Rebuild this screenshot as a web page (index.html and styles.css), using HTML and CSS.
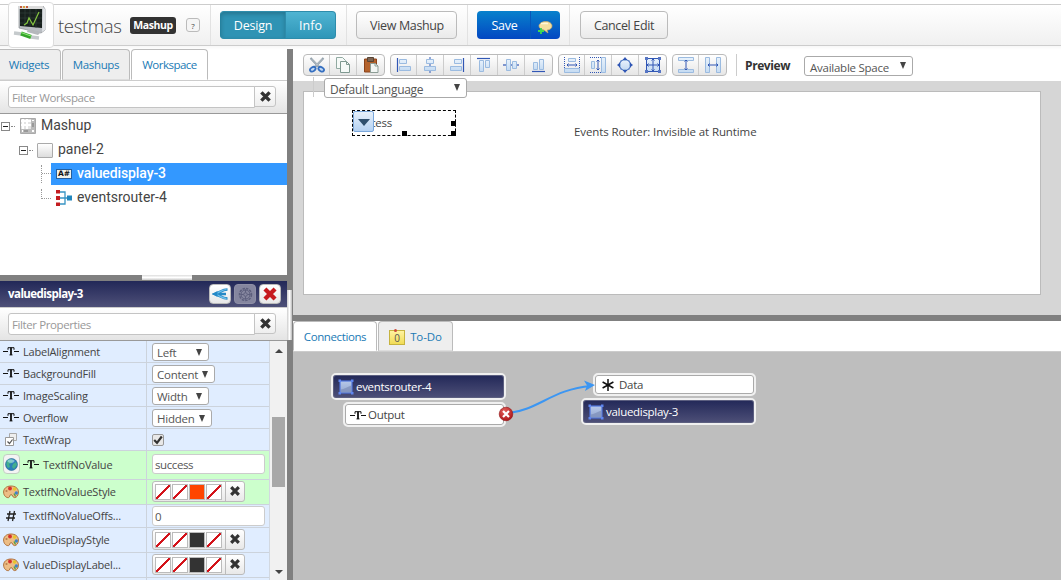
FILE: index.html
```
<!DOCTYPE html>
<html lang="en">
<head>
    <meta charset="UTF-8">
    <title>testmas - Mashup</title>
    <link rel="stylesheet" href="styles.css">
</head>
<body>
    <!-- Shared icons -->
    <svg class="defs" width="0" height="0">
        <defs>
            <linearGradient id="blue" x1="0" y1="0" x2="0" y2="1"><stop offset="0" stop-color="#e8f2fc"/><stop offset="1" stop-color="#c5dbf2"/></linearGradient>
            <linearGradient id="node" x1="0" y1="0" x2="0" y2="1"><stop offset="0" stop-color="#b7c8e8"/><stop offset="1" stop-color="#93a6cf"/></linearGradient>
            <radialGradient id="red" cx=".4" cy=".3" r=".8"><stop offset="0" stop-color="#e2605c"/><stop offset="1" stop-color="#a80c10"/></radialGradient>
            <symbol id="x" viewBox="0 0 12 12"><path d="M2.2 2.2 9.8 9.8M9.8 2.2 2.2 9.8" stroke="currentColor" stroke-width="3.2"/></symbol>
            <symbol id="text" viewBox="0 0 16 12"><path d="M0 6.500h5M11 6.500h5" stroke="#111" stroke-width="1.200"/><path d="M5 4.800V2.700h6v2.100M6.500 9.900h3" fill="none" stroke="#111"/><path d="M8 2.500v7.500" stroke="#111" stroke-width="1.800"/></symbol>
            <symbol id="palette" viewBox="0 0 16 14"><path d="M8 1C3 1 .6 4 .6 7c0 4 3 6 5 5.600 1.600-.4.6-2.600 2.400-3 1.800-.2 1.500 3 3.400 3C14 12.600 15.400 10 15.400 7 15.400 3 12 1 8 1z" fill="#edbd85" stroke="#a8662f" stroke-width=".9"/><circle cx="7" cy="3.500" r="1.900" fill="#d5312b"/><circle cx="11.500" cy="4" r="1.700" fill="#e6c52c"/><circle cx="13.300" cy="8" r="1.700" fill="#3f83c8"/><circle cx="3.500" cy="6" r="1.100" fill="#b98350"/><path d="M11 8.500l1.500 3" stroke="#59a344" stroke-width="1.400"/></symbol>
            <symbol id="entity" viewBox="0 0 16 16"><rect x="2" y="2" width="12" height="12" fill="url(#node)" stroke="#4f74dc" stroke-width="1.200"/><path d="M2.700 10.500C6 10 9 8 13.300 6.500v7H2.700z" fill="#7c8db8" opacity=".7"/><path d="M.5.5h2.500v2.500h-2.500zM13 .5h2.500v2.500h-2.500zM.5 13h2.500v2.500h-2.500zM13 13h2.500v2.500h-2.500z" fill="#5f86f0"/></symbol>
        </defs>
    </svg>

    <div class="header">
        <div class="logo">
            <svg width="36" height="36" viewBox="0 0 36 36">
                <path d="M6 0 30 0 32 3 32 24 28 27 6 22z" fill="#b9bdc2" stroke="#8b8f94" stroke-width=".7"/>
                <path d="M30 1 32 3 32 24 29 26z" fill="#dfe2e5"/>
                <path d="M6 0h24v3H6z" fill="#dcdcdc"/>
                <path d="M7 0h2v2H7z" fill="#c55b3d"/><path d="M10 0h2v2h-2z" fill="#d9a03c"/><path d="M13 0h2v2h-2z" fill="#c55b3d"/>
                <path d="M7 3 29 3 29 22 7 20z" fill="#17201d"/>
                <path d="M7 7h22M7 12h22M7 17h22M12 3v17M17 3v18M23 3v19" stroke="#34443c" stroke-width=".6"/>
                <path d="M11 19 14 17 16 12 20 19 26 6" fill="none" stroke="#86c840" stroke-width="1.200"/>
                <path d="M15 23 28 26 25 29 14 26z" fill="#b5b8bc"/>
                <path d="M1 27 9 28M18 31 26 32" stroke="#c5cacc" stroke-width="3.500"/>
                <path d="M8 27.500 18 31" stroke="#35a52b" stroke-width="4"/><path d="M8 26.500 18 30" stroke="#93e97b"/>
            </svg>
        </div>
        <span class="title">testmas</span>
        <span class="badge">Mashup</span>
        <button class="help">?</button>
        <div class="header-group mode">
            <button class="btn teal active">Design</button><button class="btn teal">Info</button>
        </div>
        <div class="header-group view"><button class="btn">View Mashup</button></div>
        <div class="header-group save-group">
            <button class="btn save">Save</button><button class="btn comment">
                <svg width="16" height="16" viewBox="0 0 16 16"><path d="M8.500 2.500c4 0 6.500 2 6.500 4.500s-2.500 4-5 4l1 3-4-3C4 10.500 2 9 2 7s2.500-4.500 6.500-4.500z" fill="#f4dfa0" stroke="#c5a864" stroke-width=".7"/><path d="M4 4.500h7" stroke="#fff8d9" stroke-width="1.500"/><path d="M4 9v6M1 12h6" stroke="#40d84f" stroke-width="1.800"/></svg>
            </button>
        </div>
        <div class="header-group cancel"><button class="btn">Cancel Edit</button></div>
    </div>

    <div class="main">
        <div class="left">
            <div class="tabs">
                <div class="tab t-widgets">Widgets</div>
                <div class="tab t-mashups">Mashups</div>
                <div class="tab t-workspace active">Workspace</div>
            </div>
            <div class="filter">
                <div class="filter-input">Filter Workspace</div>
                <button class="clear"><svg width="13" height="13"><use href="#x"/></svg></button>
            </div>
            <div class="tree">
                <div class="tree-row l0">
                    <i class="toggle"></i><i class="dots"></i>
                    <svg width="16" height="16" viewBox="0 0 16 16"><path d="M.5.5h15v15H.5z" fill="#e4e4e4" stroke="#aaa"/><path d="M3 1v10M7 1v10M1 3h10M1 7h10" stroke="#fff" stroke-width="2"/><path d="M11 1h4v14H1v-4h10z" fill="#bbb"/><path d="M12 5h2v4h-2zM4 12h4v2H4z" fill="#999"/><path d="M2 12h1v2H2zM12 2h2v1h-2zM12 12h2v2h-2z" fill="#fff"/></svg>
                    <span>Mashup</span>
                </div>
                <div class="tree-row l1">
                    <i class="toggle"></i><i class="dots"></i><i class="panel-icon"></i><span>panel-2</span>
                </div>
                <div class="tree-row l2 selected">
                    <i class="branch mid"></i>
                    <div class="tree-item"><b class="value-icon">A#</b><span>valuedisplay-3</span></div>
                </div>
                <div class="tree-row l2">
                    <i class="branch"></i>
                    <div class="tree-item">
                        <svg width="17" height="16" viewBox="0 0 17 16"><path d="M3 2h6v12H3M3 8h11" fill="none" stroke="#3794c4" stroke-width="1.300"/><path d="M0 0h4v3.500H0zM0 6h4v4H0zM0 12.500h4V16H0z" fill="#c31c20"/><path d="M11 5.500h5v5h-5z" fill="#2186bd"/></svg>
                        <span>eventsrouter-4</span>
                    </div>
                </div>
            </div>
            <div class="splitter"><i></i></div>
            <div class="props-header">
                <span>valuedisplay-3</span>
                <button><svg width="17" height="14" viewBox="0 0 17 14"><path d="M15.500 2.500C10 2.500 9 5 3 7c6 2 7 4.500 12.500 4.500M3 7h11" fill="none" stroke="#2589c7" stroke-width="2.600"/><path d="M14.500 2.500C10 2.500 9 5 3 7c6 2 7 4.500 11.500 4.500" fill="none" stroke="#6fc0ec" stroke-width="1.200"/><path d="M0 7l5.500-3v6z" fill="#2589c7"/></svg></button>
                <button class="off"><svg width="15" height="15" viewBox="0 0 15 15" fill="none" stroke="#5d5f7d"><circle cx="7.500" cy="7.500" r="6" stroke-width="1.500" stroke-dasharray="2.500 1"/><circle cx="7.500" cy="7.500" r="4.500"/><circle cx="7.500" cy="7.500" r="1.800"/><path d="M7.500 2.500v3M7.500 9.500v3M2.500 7.500h3M9.500 7.500h3"/></svg></button>
                <button class="delete"><svg width="16" height="16"><use href="#x"/></svg></button>
            </div>
            <div class="filter">
                <div class="filter-input">Filter Properties</div>
                <button class="clear"><svg width="13" height="13"><use href="#x"/></svg></button>
            </div>
            <div class="props">
                <div class="props-table">
                    <div class="prop"><div class="name"><svg width="16" height="12"><use href="#text"/></svg>LabelAlignment</div><div class="value"><div class="select w57">Left</div></div></div>
                    <div class="prop"><div class="name"><svg width="16" height="12"><use href="#text"/></svg>BackgroundFill</div><div class="value"><div class="select w63">Content</div></div></div>
                    <div class="prop"><div class="name"><svg width="16" height="12"><use href="#text"/></svg>ImageScaling</div><div class="value"><div class="select w57">Width</div></div></div>
                    <div class="prop"><div class="name"><svg width="16" height="12"><use href="#text"/></svg>Overflow</div><div class="value"><div class="select w60">Hidden</div></div></div>
                    <div class="prop">
                        <div class="name"><svg width="16" height="13" viewBox="0 0 16 13"><path d="M6.500.5h7v7h-7z" fill="#eee" stroke="#aaa"/><path d="M2.500 4.500h8v8h-8z" fill="#fff" stroke="#999"/><path d="M4.500 8.500l2 2 3-4" fill="none" stroke="#555" stroke-width="1.200"/></svg>TextWrap</div>
                        <div class="value"><i class="check"><svg width="10" height="10" viewBox="0 0 10 10"><path d="M1.200 5 4 7.800 8.800 1.500" fill="none" stroke="#333" stroke-width="2.200"/></svg></i></div>
                    </div>
                    <div class="prop h29 changed">
                        <div class="name"><i class="globe"><svg width="13" height="13" viewBox="0 0 13 13"><circle cx="6.500" cy="6.500" r="6" fill="#2b7fb8" stroke="#246796" stroke-width=".6"/><path d="M2 3C4 1 6 1 8 2L7 5 4 6 5 9 3 10C1 8 1 5 2 3zM8 6l3-2 1 3-3 4-2-2z" fill="#42af8d"/><ellipse cx="6" cy="3" rx="3.500" ry="1.800" fill="#b5e2f2" opacity=".6"/></svg></i><svg width="16" height="12"><use href="#text"/></svg>TextIfNoValue</div>
                        <div class="value"><div class="input">success</div></div>
                    </div>
                    <div class="prop h25 changed">
                        <div class="name"><svg width="16" height="14"><use href="#palette"/></svg>TextIfNoValueStyle</div>
                        <div class="value"><div class="style-picker"><i></i><i></i><i class="orange"></i><i></i><b><svg width="12" height="12"><use href="#x"/></svg></b></div></div>
                    </div>
                    <div class="prop h23">
                        <div class="name"><svg width="16" height="12" viewBox="0 0 16 12"><path d="M7 1 5 11M11.500 1l-2 10M4 4h9M3 8h9" stroke="#222" stroke-width="1.300"/></svg>TextIfNoValueOffs...</div>
                        <div class="value"><div class="input">0</div></div>
                    </div>
                    <div class="prop h25">
                        <div class="name"><svg width="16" height="14"><use href="#palette"/></svg>ValueDisplayStyle</div>
                        <div class="value"><div class="style-picker"><i></i><i></i><i class="dark"></i><i></i><b><svg width="12" height="12"><use href="#x"/></svg></b></div></div>
                    </div>
                    <div class="prop h25">
                        <div class="name"><svg width="16" height="14"><use href="#palette"/></svg>ValueDisplayLabel...</div>
                        <div class="value"><div class="style-picker"><i></i><i></i><i class="dark"></i><i></i><b><svg width="12" height="12"><use href="#x"/></svg></b></div></div>
                    </div>
                    <div class="prop"><div class="name"></div><div class="value"></div></div>
                </div>
                <div class="scrollbar"><i class="up"></i><i class="thumb"></i><i class="down"></i></div>
            </div>
        </div>

        <div class="v-splitter"><i></i></div>

        <div class="right">
            <div class="toolbar">
                <div class="tools">
                    <button><svg width="18" height="18" viewBox="0 0 18 18"><path d="M2.500 2 12 12M15.500 2 6 12" stroke="#8796a1" stroke-width="2"/><path d="M3 2.500 12 11.500M15 2.500 6 11.500" stroke="#dbe3e8" stroke-width=".7"/><ellipse cx="4.800" cy="13.200" rx="3" ry="2" transform="rotate(-30 4.800 13.200)" fill="#c2d9f4" stroke="#356fc0" stroke-width="1.800"/><ellipse cx="13.200" cy="13.200" rx="3" ry="2" transform="rotate(30 13.200 13.200)" fill="#c2d9f4" stroke="#356fc0" stroke-width="1.800"/></svg></button>
                    <button><svg width="16" height="18" viewBox="0 0 16 18"><path d="M1.500 1.500h6l3 3v8h-9z" fill="#f6faf8" stroke="#91aaa2"/><path d="M5.500 5.500h6l3 3v8h-9z" fill="#f6faf8" stroke="#7f9991"/><path d="M11.500 5.500v3h3" fill="none" stroke="#7f9991"/></svg></button>
                    <button><svg width="16" height="18" viewBox="0 0 16 18"><path d="M1.500 3h12v13h-12z" fill="#b4622c" stroke="#8a431a"/><path d="M4.500 1.500h6v4h-6z" fill="#7c6554" stroke="#594433"/><path d="M7.500 7.500h5l2.500 2.500v6.500H7.500z" fill="#f2f6f4" stroke="#8c9d96"/><path d="M12 7.500V10h3" fill="none" stroke="#8c9d96"/></svg></button>
                </div>
                <div class="tools">
                    <button><svg viewBox="0 0 16 16"><path d="M1.500 1v14" stroke="#3157b5" stroke-width="1.200"/><path d="M3.500 2.500h7v4h-7zM3.500 9.500h11v4h-11z"/></svg></button>
                    <button><svg viewBox="0 0 16 16"><path d="M8 0v16" stroke="#3157b5"/><path d="M4.500 2.500h7v4h-7zM2.500 9.500h11v4h-11z"/></svg></button>
                    <button><svg viewBox="0 0 16 16"><path d="M14.500 1v14" stroke="#3157b5" stroke-width="1.200"/><path d="M5.500 2.500h7v4h-7zM1.500 9.500h11v4h-11z"/></svg></button>
                    <button><svg viewBox="0 0 16 16"><path d="M1 1.500h13" stroke="#3157b5" stroke-width="1.200"/><path d="M3.500 3.500h4v11h-4zM9.500 3.500h4v7h-4z"/></svg></button>
                    <button><svg viewBox="0 0 16 16"><path d="M0 8h16" stroke="#3157b5" stroke-width="1.200"/><path d="M3.500 2.500h4v11h-4zM9.500 4.500h4v7h-4z"/></svg></button>
                    <button><svg viewBox="0 0 16 16"><path d="M1 14.500h13" stroke="#3157b5" stroke-width="1.200"/><path d="M2.500 5.500h4v7h-4zM8.500 2.500h4v10h-4z"/></svg></button>
                </div>
                <div class="tools">
                    <button><svg viewBox="0 0 16 16"><path d="M.5 0v11M15.500 0v11" stroke="#3157b5" stroke-dasharray="1 1"/><path d="M4.500 1.500h7v3h-7zM.5 11.500h15v4H.5z"/><path class="line" d="M3 8h10M4.500 6.500 3 8l1.500 1.500M11.500 6.500 13 8l-1.500 1.500"/></svg></button>
                    <button><svg viewBox="0 0 16 16"><path d="M0 .5h11M0 15.500h11" stroke="#3157b5" stroke-dasharray="1 1"/><path d="M1.500 4.500h3v7h-3zM11.500.5h4v15h-4z"/><path class="line" d="M8 3v10M6.500 4.500 8 3l1.500 1.500M6.500 11.500 8 13l1.500-1.500"/></svg></button>
                    <button><svg viewBox="0 0 16 16"><path d="M3.500 3.500h9v9h-9z"/><path class="line" d="M6 2.500h4l3.500 3.500v4L10 13.500H6L2.500 10V6z"/><path d="M8 0l2 2.500H6zM8 16l2-2.500H6zM0 8l2.500-2v4zM16 8l-2.500-2v4z" fill="#3157b5" stroke="none"/></svg></button>
                    <button><svg viewBox="0 0 16 16"><path d="M1.500 1.500h13v13h-13z" stroke="#3157b5"/><path class="line" d="M8 1v14M1 8h14M6.500 3.500 8 2l1.500 1.500M6.500 12.500 8 14l1.500-1.500M3.500 6.500 2 8l1.500 1.500M12.500 6.500 14 8l-1.500 1.500"/><path d="M0 0h3v3H0zM13 0h3v3h-3zM0 13h3v3H0zM13 13h3v3h-3z" fill="#5675c4" stroke="none"/></svg></button>
                </div>
                <div class="tools">
                    <button><svg viewBox="0 0 16 16"><path d="M.5.500h15v3H.5zM.5 12.500h15v3H.5z"/><path class="line" d="M8 3v10M6.500 4.500 8 3l1.500 1.500M6.500 11.500 8 13l1.500-1.500"/></svg></button>
                    <button><svg viewBox="0 0 16 16"><path d="M.5.500h4v15h-4zM11.500.500h4v15h-4z"/><path class="line" d="M3 8h10M4.500 6.500 3 8l1.500 1.500M11.500 6.500 13 8l-1.500 1.500"/></svg></button>
                </div>
                <div class="preview">Preview</div>
                <div class="select space">Available Space</div>
                <div class="select language">Default Language</div>
            </div>
            <div class="stage">
                <div class="page">
                    <div class="widget value-widget"><span>success</span><div class="widget-menu"></div><i class="h1"></i><i class="h2"></i><i class="h3"></i></div>
                    <div class="widget router">Events Router: Invisible at Runtime</div>
                </div>
            </div>
            <div class="splitter"></div>
            <div class="tabs bottom-tabs">
                <div class="tab t-connections active">Connections</div>
                <div class="tab t-todo"><span class="note">0</span>To-Do</div>
            </div>
            <div class="connections">
                <div class="node dark n1"><svg width="16" height="16"><use href="#entity"/></svg><span>eventsrouter-4</span></div>
                <div class="node n2"><svg width="16" height="12"><use href="#text"/></svg><span>Output</span></div>
                <div class="node n3"><svg width="12" height="12" viewBox="0 0 12 12"><path d="M6 0v12M.6 3l10.800 6M.6 9l10.800-6" stroke="#111" stroke-width="1.500"/></svg><span>Data</span></div>
                <div class="node dark n4"><svg width="16" height="16"><use href="#entity"/></svg><span>valuedisplay-3</span></div>
                <svg class="wire" width="110" height="50" viewBox="0 0 110 50">
                    <path d="M16 41C45 38 60 17 98 14" fill="none" stroke="#3c96f2" stroke-width="2"/>
                    <path d="M102 13 91 8.500 94 13.500 92 19z" fill="#3c96f2"/>
                    <circle cx="13" cy="42" r="6.800" fill="url(#red)" stroke="#8f1214" stroke-width=".6"/>
                    <path d="M10 39 16 45M16 39 10 45" stroke="#fff" stroke-width="2.200"/>
                </svg>
            </div>
        </div>
    </div>
</body>
</html>
```
FILE: styles.css
```
* {
    box-sizing: border-box;
}
body {
    margin: 0;
    width: 1061px;
    height: 580px;
    overflow: hidden;
    font-family: "Open Sans", "Noto Sans", sans-serif;
    font-size: 12px;
    color: #444;
    background: #fff;
    display: flex;
    flex-direction: column;
}
button {
    font: inherit;
    color: inherit;
    padding: 0;
    margin: 0;
}
svg {
    display: block;
    flex: none;
}
i {
    font-style: normal;
    flex: none;
}
.defs {
    position: absolute;
}

/* Header */
.header {
    height: 42px;
    margin-top: 4px;
    flex: none;
    display: flex;
    align-items: center;
    border-top: 1px solid #ccc;
    border-bottom: 1px solid #ccc;
    background: linear-gradient(#fff, #f0f0f0);
}
.logo {
    width: 46px;
    height: 46px;
    margin: 0 4px 0 8px;
    padding: 3px 4px;
    border: 1px solid #ddd;
    border-radius: 4px;
    background: #fff;
    flex: none;
    position: relative;
    z-index: 1;
}
.title {
    width: 72px;
    font-size: 18.5px;
    font-weight: 300;
    letter-spacing: -0.35px;
    line-height: 30px;
    padding-top: 2px;
}
.badge {
    width: 46px;
    height: 17px;
    border-radius: 3px;
    background: #333;
    color: #fff;
    font-size: 10.5px;
    font-weight: bold;
    line-height: 17px;
    text-align: center;
    letter-spacing: -0.4px;
}
.help {
    width: 14px;
    height: 14px;
    margin-left: 10px;
    border: 1px solid #bbb;
    border-radius: 3px;
    background: #f5f5f5;
    font-size: 8px;
    line-height: 11px;
}
.header-group {
    height: 40px;
    display: flex;
    align-items: center;
    border-left: 1px solid #e2e2e2;
    padding-left: 9px;
}
.mode {
    margin-left: 10px;
    width: 136px;
}
.view {
    width: 121px;
}
.save-group {
    width: 102px;
}
.btn {
    height: 28px;
    border: 1px solid #bbb;
    border-radius: 4px;
    background: linear-gradient(#fff, #eaeaea);
    font-size: 12.5px;
    line-height: 27px;
    letter-spacing: -0.35px;
}
.view .btn {
    width: 101px;
    padding-left: 1px;
}
.cancel .btn {
    width: 88px;
    margin-left: 1px;
}
.teal {
    width: 50px;
    border: 1px solid #2d8cab;
    border-left: 0;
    border-radius: 0 4px 4px 0;
    background: linear-gradient(#4fb4d2, #2f96b8);
    color: #fff;
    letter-spacing: 0;
}
.teal.active {
    width: 66px;
    border-left: 1px solid #2582a0;
    border-radius: 4px 0 0 4px;
    background: #2f93b4;
    box-shadow: inset 0 2px 4px rgba(0, 0, 0, 0.2);
    letter-spacing: -0.2px;
}
.save {
    width: 54px;
    border: 0;
    border-right: 1px solid #0757ba;
    border-radius: 4px 0 0 4px;
    background: linear-gradient(#0781cc, #0347c2);
    color: #fff;
    padding-left: 2px;
    letter-spacing: -0.3px;
}
.comment {
    width: 29px;
    border: 0;
    border-radius: 0 4px 4px 0;
    background: linear-gradient(#0781cc, #0347c2);
    display: flex;
    align-items: center;
    justify-content: center;
    padding: 4px 2px 0 0;
}

/* Columns */
.main {
    flex: 1;
    display: flex;
    min-height: 0;
    padding-top: 3px;
    background: linear-gradient(#f7f7f7, #fff 4px);
}
.left {
    width: 287px;
    display: flex;
    flex-direction: column;
}
.right {
    flex: 1;
    min-width: 0;
    display: flex;
    flex-direction: column;
}
.v-splitter {
    width: 6px;
    background: #808080;
    padding-top: 241px;
}
.v-splitter i {
    display: block;
    width: 5px;
    height: 50px;
    background: linear-gradient(90deg, #ccc, #fff, #bbb);
}
.splitter {
    height: 6px;
    flex: none;
    background: #808080;
}
.splitter i {
    display: block;
    width: 50px;
    height: 5px;
    margin: 0 auto 0 142px;
    background: linear-gradient(#ddd, #fff, #ccc);
}

/* Tabs */
.tabs {
    height: 31px;
    flex: none;
    display: flex;
    gap: 1px;
}
.tab {
    border: 1px solid #bbb;
    border-bottom: 1px solid #ddd;
    border-radius: 4px 4px 0 0;
    background: #eee;
    color: #1a7ab5;
    text-align: center;
    line-height: 30px;
    font-size: 11.5px;
    letter-spacing: -0.35px;
}
.tab.active {
    background: #fff;
    border-bottom-color: #fff;
}
.t-widgets {
    width: 61px;
    border-left: 0;
    border-top-left-radius: 0;
    padding-right: 2px;
}
.t-mashups {
    width: 68px;
}
.t-workspace {
    width: 77px;
    letter-spacing: -0.5px;
}

/* Filter bars */
.filter {
    height: 34px;
    flex: none;
    display: flex;
    padding: 5px 0 0 8px;
    border-top: 1px solid #ccc;
    border-bottom: 1px solid #999;
    background: linear-gradient(#fff, #e4e4e4);
}
.filter-input {
    width: 247px;
    height: 22px;
    border: 1px solid #c4c4c4;
    border-radius: 3px 0 0 3px;
    background: #fff;
    padding-left: 3px;
    color: #999;
    line-height: 21px;
    font-size: 11.5px;
    letter-spacing: -0.4px;
}
.clear {
    width: 22px;
    height: 21px;
    margin-left: -1px;
    border: 1px solid #c4c4c4;
    border-radius: 0 3px 3px 0;
    background: linear-gradient(#fff, #eee);
    color: #333;
    display: flex;
    align-items: center;
    justify-content: center;
}

/* Tree */
.tree {
    height: 161px;
    flex: none;
    font-family: Roboto, sans-serif;
    font-size: 14px;
    background: #fff;
}
.tree-row {
    height: 24px;
    display: flex;
    align-items: center;
}
.l0 {
    padding-left: 1px;
}
.l1 {
    padding-left: 19px;
}
.l2 {
    padding-left: 41px;
}
.toggle {
    width: 9px;
    height: 9px;
    border: 1px solid #888;
    margin-top: 1px;
    background: linear-gradient(#222, #222) center / 5px 1px no-repeat;
}
.dots {
    width: 4px;
    border-top: 1px dotted #888;
    margin: 1px 5px 0 1px;
}
.tree-row span {
    margin: -2px 0 0 5px;
}
.panel-icon {
    width: 16px;
    height: 15px;
    border: 1px solid #aaa;
    background: linear-gradient(#fff, #ddd);
    border-radius: 1px;
    margin-left: -1px;
}
.branch {
    width: 10px;
    height: 10px;
    align-self: flex-start;
    margin-top: 3px;
    border-left: 1px dotted #999;
    border-bottom: 1px dotted #999;
}
.branch.mid {
    height: 18px;
    border-bottom: 0;
    background: linear-gradient(90deg, #999 50%, transparent 50%) 0 8px / 2px 1px repeat-x;
}
.tree-item {
    flex: 1;
    height: 22px;
    display: flex;
    align-items: center;
    padding-left: 5px;
}
.tree-item svg + span {
    margin-left: 4px;
}
.selected .tree-item {
    background: #3398ff;
    color: #fff;
    font-weight: 500;
    letter-spacing: -0.1px;
}
.value-icon {
    width: 16px;
    height: 10px;
    border: 1px solid #255f9e;
    background: #f2f2e9;
    color: #111;
    font: bold 7.5px/8px "DejaVu Sans", sans-serif;
    text-align: center;
}

/* Properties */
.props-header {
    height: 26px;
    flex: none;
    display: flex;
    align-items: center;
    gap: 3px;
    padding: 0 6px 0 8px;
    background: linear-gradient(#222858, #4e5078);
    color: #fff;
    font-size: 11.5px;
    font-weight: bold;
    letter-spacing: -0.55px;
}
.props-header span {
    flex: 1;
    margin-top: -1px;
}
.props-header button {
    width: 22px;
    height: 20px;
    border: 1px solid #bbb;
    border-radius: 4px;
    background: linear-gradient(#fff, #e8e8e8);
    display: flex;
    align-items: center;
    justify-content: center;
}
.props-header .off {
    background: #85869f;
    border-color: #8e8fa6;
}
.props-header .delete {
    color: #c61a1f;
}
.props {
    flex: 1;
    display: flex;
    min-height: 0;
    overflow: hidden;
}
.props-table {
    width: 270px;
    border-right: 1px solid #d2d8e0;
}
.prop {
    height: 22px;
    display: flex;
    background: #e0edff;
    border-bottom: 1px solid #ccd3dc;
    letter-spacing: -0.2px;
}
.prop.changed {
    background: #ccffcc;
}
.h29 {
    height: 29px;
}
.h25 {
    height: 25px;
}
.h23 {
    height: 23px;
}
.name {
    width: 147px;
    border-right: 1px solid #ccd3dc;
    padding: 0 0 1px 3px;
    display: flex;
    align-items: center;
    gap: 4px;
    font-size: 11px;
    white-space: nowrap;
}
.value {
    display: flex;
    align-items: center;
    padding-left: 5px;
}
.h29 .name,
.h29 .value {
    padding-bottom: 2px;
}
.h25 .value,
.h23 .value {
    padding-bottom: 1px;
}
.select {
    height: 18px;
    border: 1px solid #aaa;
    border-radius: 3px;
    background: #fff;
    color: #555;
    padding-left: 4px;
    font-size: 11.5px;
    line-height: 18px;
    letter-spacing: -0.25px;
    position: relative;
    white-space: nowrap;
}
.select::after {
    content: "";
    position: absolute;
    right: 6px;
    top: 5px;
    border: 3.5px solid transparent;
    border-top: 7px solid #444;
    border-bottom: 0;
}
.w57 {
    width: 57px;
}
.w63 {
    width: 63px;
}
.w60 {
    width: 60px;
}
.check {
    width: 12px;
    height: 12px;
    border: 1px solid #999;
    background: #e8e8e8;
    border-radius: 2px;
}
.globe {
    width: 17px;
    height: 20px;
    border: 1px solid #c2cfc2;
    border-radius: 4px;
    background: #f4f4f4;
    display: flex;
    align-items: center;
    justify-content: center;
    margin-right: -1px;
}
.input {
    width: 113px;
    height: 20px;
    border: 1px solid #ccc;
    border-radius: 3px;
    background: #fff;
    color: #555;
    padding-left: 2px;
    line-height: 19px;
    font-size: 11.5px;
    letter-spacing: -0.4px;
}
.style-picker {
    width: 93px;
    height: 21px;
    border: 1px solid #bbb;
    border-radius: 3px;
    background: linear-gradient(#fff, #e8e8e8);
    color: #333;
    display: flex;
    align-items: center;
    gap: 1px;
    padding-left: 2px;
}
.style-picker i {
    width: 16px;
    height: 16px;
    border: 1px solid #bbb;
    background: linear-gradient(to bottom right, #fff 45%, #d3131a 46%, #d3131a 54%, #fff 55%);
}
.style-picker .orange {
    background: #ff4500;
}
.style-picker .dark {
    background: #333;
}
.style-picker b {
    height: 19px;
    border-left: 1px solid #bbb;
    margin-left: 2px;
    padding: 3px 0 0 3px;
}
.scrollbar {
    flex: 1;
    background: #f1f1f1;
    display: flex;
    flex-direction: column;
    align-items: center;
}
.up,
.down {
    border: 4px solid transparent;
    border-bottom: 4px solid #444;
    border-top: 0;
    margin-top: 8px;
}
.thumb {
    width: 13px;
    height: 70px;
    margin: 64px 0 83px;
    background: #a8a8a8;
}
.down {
    border-top: 4px solid #444;
    border-bottom: 0;
    margin-top: 0;
}

/* Toolbar */
.toolbar {
    height: 32px;
    flex: none;
    display: flex;
    align-items: flex-start;
    gap: 5px;
    padding: 5px 0 0 10px;
    position: relative;
    z-index: 1;
}
.tools {
    height: 22px;
    display: flex;
    border: 1px solid #bbb;
    border-radius: 4px;
    background: linear-gradient(#fff, #e6e6e6);
}
.tools button {
    width: 27px;
    height: 20px;
    border: 0;
    border-right: 1px solid #ccc;
    background: none;
    display: flex;
    align-items: center;
    justify-content: center;
}
.tools button:last-child {
    border-right: 0;
}
.tools button:first-child {
    width: 26px;
}
.tools svg[viewBox="0 0 16 16"] {
    width: 16px;
    height: 16px;
    fill: url(#blue);
    stroke: #9bbbe0;
}
.tools .line {
    fill: none;
    stroke: #3157b5;
}
.preview {
    height: 22px;
    margin-left: 4px;
    padding-left: 8px;
    border-left: 1px solid #ccc;
    font-weight: bold;
    line-height: 23px;
    letter-spacing: -0.4px;
    width: 63px;
    color: #333;
}
.space {
    width: 109px;
    height: 20px;
    margin-top: 2px;
    padding-left: 5px;
    line-height: 22px;
}
.language {
    position: absolute;
    left: 31px;
    top: 29px;
    width: 143px;
    height: 20px;
    padding-left: 5px;
    line-height: 22px;
    font-size: 12px;
    letter-spacing: -0.3px;
}

/* Mashup canvas */
.stage {
    height: 234px;
    flex: none;
    background: #d6d6d6;
    padding: 10px 0 0 10px;
}
.page {
    width: 738px;
    height: 204px;
    border: 1px solid #bbb;
    background: #fff;
    position: relative;
}
.page::before {
    content: "";
    position: absolute;
    left: 9px;
    top: -15px;
    height: 20px;
    border-left: 1px solid #ccc;
}
.widget {
    position: absolute;
    font-size: 11.5px;
}
.value-widget {
    left: 48px;
    top: 18px;
    width: 104px;
    height: 26px;
    border: 1px dashed #000;
    line-height: 24px;
    letter-spacing: -0.3px;
}
.value-widget i {
    position: absolute;
    width: 5px;
    height: 5px;
    background: #000;
}
.h1 {
    right: -1px;
    top: 10px;
}
.h2 {
    right: -1px;
    bottom: -1px;
}
.h3 {
    left: 49px;
    bottom: -1px;
}
.widget-menu {
    position: absolute;
    left: 0;
    top: 0;
    width: 21px;
    height: 21px;
    border: 1px solid #7aa7db;
    border-radius: 2px;
    background: linear-gradient(#e6f0fb, #b5d2f2);
}
.widget-menu::after {
    content: "";
    position: absolute;
    left: 4px;
    top: 7px;
    border: 6px solid transparent;
    border-top: 7px solid #2e4f6e;
    border-bottom: 0;
}
.router {
    left: 270px;
    top: 32px;
    white-space: nowrap;
    letter-spacing: -0.1px;
}

/* Connections */
.bottom-tabs {
    background: #fff;
    border-bottom: 1px solid #ccc;
}
.t-connections {
    width: 84px;
    letter-spacing: -0.4px;
}
.t-todo {
    width: 75px;
    display: flex;
    justify-content: center;
    gap: 5px;
    letter-spacing: -0.1px;
}
.note {
    width: 16px;
    height: 15px;
    margin-top: 8px;
    border: 1px solid #c6b33f;
    background: linear-gradient(#fff3a0, #f1dc56);
    color: #555;
    font-size: 10px;
    line-height: 15px;
    position: relative;
}
.note::before {
    content: "";
    position: absolute;
    left: 4px;
    top: -2px;
    width: 3px;
    height: 3px;
    border-radius: 50%;
    background: #cc4a36;
}
.connections {
    flex: 1;
    background: #bebebe;
    position: relative;
}
.node {
    position: absolute;
    height: 25px;
    border: 2px solid #f0f0f0;
    box-shadow: inset 0 0 0 1px #aaa;
    border-radius: 5px;
    background: #fff;
    display: flex;
    align-items: center;
    gap: 3px;
    padding-left: 5px;
    font-size: 11.5px;
    letter-spacing: -0.3px;
}
.node span {
    margin: -1px 0 0 -1px;
}
.node.dark {
    height: 27px;
    box-shadow: inset 0 0 0 1px #5c5f80;
    background: linear-gradient(#222858, #4e5078);
    color: #fff;
}
.node.dark span {
    margin-top: 0;
}
.n1 {
    left: 38px;
    top: 21px;
    width: 175px;
}
.n2 {
    left: 50px;
    top: 50px;
    width: 163px;
}
.n3 {
    left: 300px;
    top: 21px;
    width: 163px;
    height: 23px;
    padding-left: 7px;
    gap: 6px;
}
.n4 {
    left: 288px;
    top: 46px;
    width: 175px;
}
.wire {
    position: absolute;
    left: 200px;
    top: 20px;
}
```
